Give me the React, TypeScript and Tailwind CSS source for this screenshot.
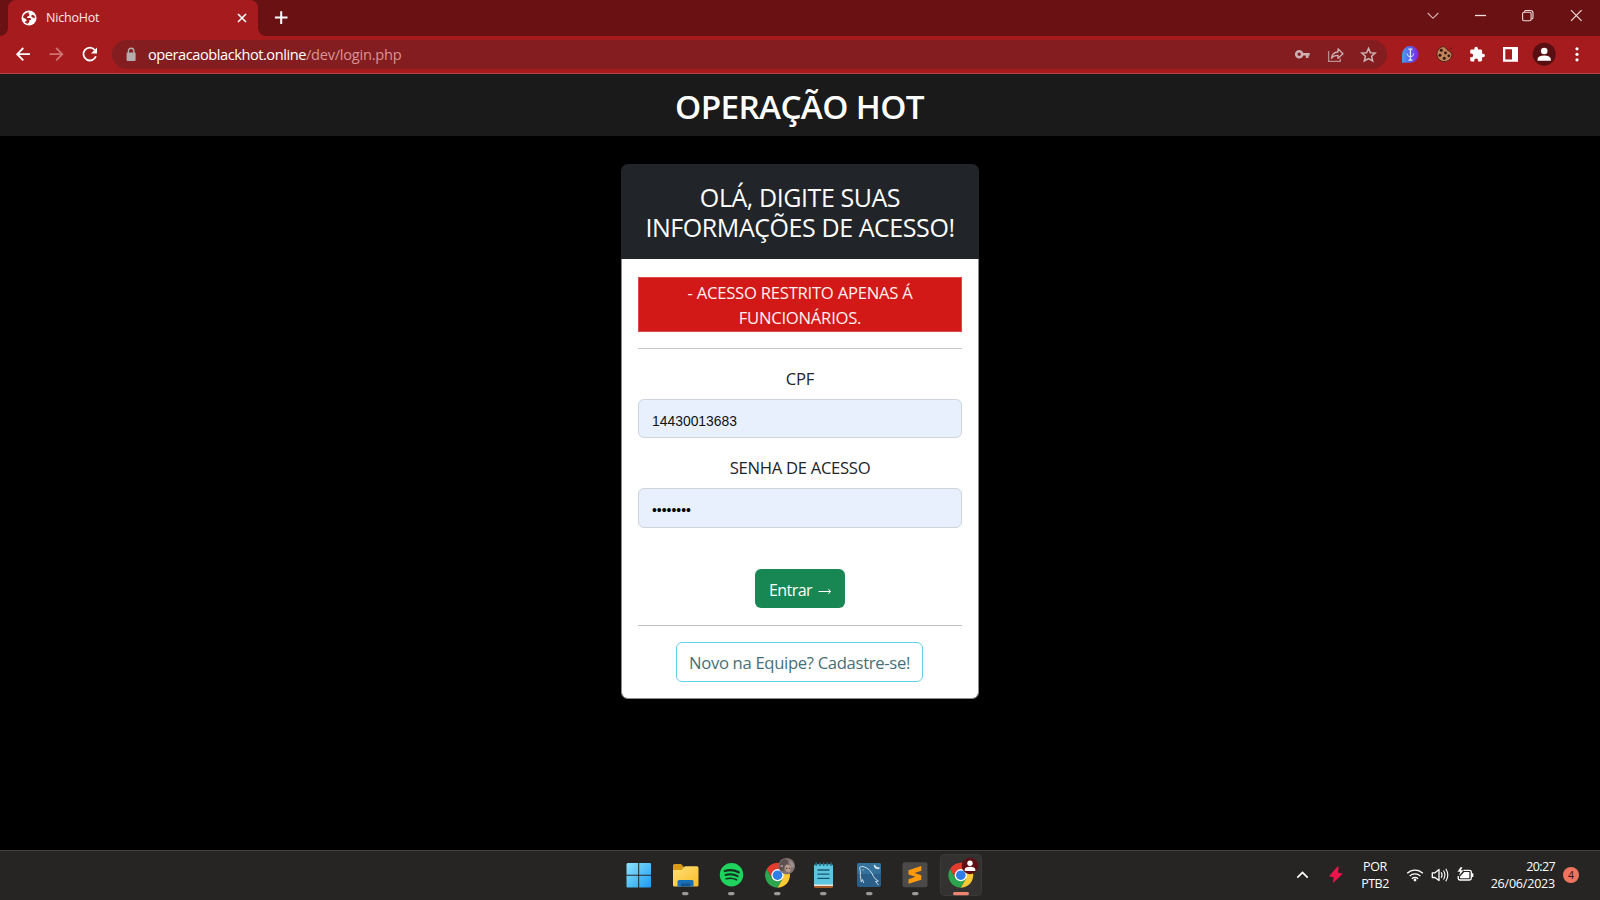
import type { ReactNode } from "react";

function ChromeLogo({ cx, cy }: { cx: number; cy: number }) {
  return (
    <g transform={`translate(${cx} ${cy})`}>
      <path d="M-10.8 -6.2A12.5 12.5 0 0 1 10.8 -6.2L0 -6.2L-5.4 3.1Z" fill="#e33b2e" />
      <path d="M-10.8 -6.25A12.5 12.5 0 0 0 0 12.5L5.4 3.1L-5.4 3.1Z" fill="#2da44e" />
      <path d="M10.8 -6.25A12.5 12.5 0 0 1 0 12.5L5.4 3.1L0 -6.2Z" fill="#fcc934" />
      <circle r="6.1" fill="#fff" />
      <circle r="4.8" fill="#2f7de9" />
    </g>
  );
}

function TaskIcon({ x, active, running = true, children }: { x: number; active?: boolean; running?: boolean; children: ReactNode }) {
  return (
    <svg viewBox={`${x - 23} 851 46 49`} className="h-[49px] w-[46px] shrink-0">
      {active && <rect x={x - 20.5} y="854.5" width="41" height="41" rx="4" fill="#333231" stroke="#3b3a39" strokeWidth="1" />}
      {children}
      {running &&
        (active ? (
          <rect x={x - 8} y="892" width="16" height="3.2" rx="1.6" fill="#ee8571" />
        ) : (
          <rect x={x - 3} y="892" width="6.5" height="3.2" rx="1.6" fill="#9b9a99" />
        ))}
    </svg>
  );
}

function TitleBar() {
  return (
    <div className="flex h-9 bg-[#6a1113]">
      <svg viewBox="0 0 8 36" className="h-9 w-2 shrink-0">
        <path d="M8 28V36H0A8 8 0 0 0 8 28Z" fill="#a61c1e" />
      </svg>
      <div className="flex h-9 w-[250px] items-center rounded-t-lg bg-[#a61c1e] pr-[11px] pl-[13px]">
        <svg viewBox="0 0 16 16" className="mb-px h-4 w-4">
          <circle cx="8" cy="8" r="7.5" fill="#fff" />
          <path d="M8.600 1.900Q7 2.500 7.600 3.800 9 4.200 8.300 5.600 7.600 6.600 6.200 6.700L6 8H9Q10.200 8.300 10.100 9.800L8.300 10.300 8.200 11.800 7 13.800Q5 13.500 3.500 12L5.600 11 5.300 9.300 2 7.600Q2.300 3 8.600 1.900Z" fill="#a61c1e" />
          <path d="M10.300 5.200Q12.500 4.300 13.600 6L14 8.300 12.300 7.700 10.600 7Z" fill="#a61c1e" />
        </svg>
        <span className="ml-[9px] grow text-[12.5px] leading-4 tracking-[-0.2px] text-[#fbe6e6]">NichoHot</span>
        <svg viewBox="0 0 10 10" className="mb-px h-[10px] w-[10px]">
          <path d="M1 1 9 9M9 1 1 9" stroke="#fff" strokeWidth="1.6" />
        </svg>
      </div>
      <svg viewBox="258 0 8 36" className="h-9 w-2 shrink-0">
        <path d="M258 28V36H266A8 8 0 0 1 258 28Z" fill="#a61c1e" />
      </svg>
      <svg viewBox="266 0 30 36" className="h-9 w-[30px]">
        <path d="M281.200 11.300V24M274.900 17.600H287.500" stroke="#fff" strokeWidth="2" />
      </svg>
      <svg viewBox="1410 0 190 36" className="ml-auto h-9 w-[190px]" fill="none" stroke="#f0dcdc" strokeWidth="1.1">
        <path d="M1427.700 13 1433 18.300 1438.300 13" stroke="#d9b4b4" />
        <path d="M1475 15.500H1486" strokeWidth="1.300" />
        <rect x="1522.600" y="12.200" width="8.500" height="8.500" rx="1.500" />
        <path d="M1524.500 12V11.500Q1525 10.500 1526 10.500H1530.500Q1533 10.500 1533 13V17.500Q1533 19 1531.500 19.300" />
        <path d="M1571 10.200 1581.600 20.800M1581.600 10.200 1571 20.800" strokeWidth="1.200" />
      </svg>
    </div>
  );
}

function ToolBar() {
  return (
    <div className="flex h-[38px] items-start border-b border-[#b5474b] bg-[#a61c1e]">
      <svg viewBox="0 36 112 37" className="h-[37px] w-[112px] shrink-0" fill="none" strokeWidth="1.800">
        <path d="M30 54.200H17.500M23.300 48 17.200 54.200 23.300 60.400" stroke="#fff" />
        <path d="M49.500 54.200H62M56.200 48 62.300 54.200 56.200 60.400" stroke="#cf7274" />
        <path d="M94.800 50A6.400 6.400 0 1 0 95.900 56.200" stroke="#fff" />
        <path d="M97 47.400V53.400H91Z" fill="#fff" />
      </svg>
      <div className="mt-1 flex h-[29px] w-[1275px] shrink-0 items-center rounded-full bg-[#841d1f] pl-[14px]">
        <svg viewBox="126 47 10 15" className="h-[15px] w-[10px]">
          <rect x="126.600" y="52.600" width="9" height="8.400" rx="1" fill="#b5acae" />
          <path d="M128.400 53V51A2.700 2.700 0 0 1 133.800 51V53" fill="none" stroke="#b5acae" strokeWidth="1.400" />
        </svg>
        <span className="mb-[2px] ml-[12px] text-[14.600px] leading-5 tracking-[-0.450px] text-white">operacaoblackhot.online</span>
        <span className="mb-[2px] text-[14.600px] leading-5 tracking-[-0.240px] text-[#dc9293]">/dev/login.php</span>
        <svg viewBox="1290 40 97 29" className="ml-auto h-[29px] w-[97px]" fill="none" stroke="#ccb0b2" strokeWidth="1.300">
          <circle cx="1299.200" cy="54.200" r="3" strokeWidth="2.600" />
          <path d="M1302.500 54.200H1309.700M1307.200 54V58" strokeWidth="2.600" />
          <path d="M1328.600 51V61.400H1340.300V58.500" stroke="#b98d8f" />
          <path d="M1331.500 58.300Q1332 52.300 1338 52V48.800L1343 53.700 1338 58.300V55.300Q1333.500 55.200 1331.500 58.300Z" strokeLinejoin="round" />
          <path d="M1368.500 48.300 1370.400 52.700 1375.200 53.100 1371.600 56.300 1372.700 61 1368.500 58.500 1364.300 61 1365.400 56.300 1361.800 53.100 1366.600 52.700Z" strokeWidth="1.500" />
        </svg>
      </div>
      <svg viewBox="1387 36 213 37" className="h-[37px] w-[213px] shrink-0">
        <defs>
          <linearGradient id="mic" x1="0" x2="1" y1="0" y2="0">
            <stop offset="0" stopColor="#3fa0e8" />
            <stop offset="0.550" stopColor="#5b5cf0" />
            <stop offset="1" stopColor="#8a1ee0" />
          </linearGradient>
        </defs>
        <path d="M1410.300 46A8.300 8.300 0 0 1 1410.300 62.700H1402V54.300A8.300 8.300 0 0 1 1410.300 46Z" fill="url(#mic)" />
        <path d="M1410.400 49V60M1408.400 49.200H1412.400M1408.400 60.200H1412.400" stroke="#e5e8ff" strokeWidth="1.300" />
        <path d="M1407 53.500Q1407.300 56.800 1410.400 56.800T1413.800 53.500" fill="none" stroke="#d5dcff" strokeWidth="1" />
        <path d="M1444.500 46.500A7.600 7.600 0 1 0 1451.800 52.500Q1449.800 52.800 1449.300 50.800 1447 51 1446.900 48.700 1445 48.500 1444.500 46.500Z" fill="#c08458" stroke="#4f1f14" strokeWidth="1" />
        <g fill="#331510">
          <circle cx="1441.300" cy="50.300" r="1.500" />
          <circle cx="1445.500" cy="53" r="1.400" />
          <circle cx="1440" cy="55.300" r="1.500" />
          <circle cx="1448.800" cy="55.800" r="1.400" />
          <circle cx="1444.300" cy="58.300" r="1.500" />
          <circle cx="1451" cy="48.300" r="0.700" />
        </g>
        <path
          transform="translate(1468.800 46) scale(0.700)"
          d="M20.500 11H19V7c0-1.100-.9-2-2-2h-4V3.500a2.500 2.500 0 0 0-5 0V5H4c-1.100 0-1.990.9-1.990 2v3.800H3.500c1.490 0 2.700 1.210 2.700 2.700s-1.210 2.700-2.700 2.700H2V20c0 1.100.9 2 2 2h3.800v-1.500c0-1.490 1.210-2.700 2.700-2.700 1.490 0 2.700 1.210 2.700 2.700V22H17c1.100 0 2-.9 2-2v-4h1.500a2.500 2.500 0 0 0 0-5z"
          fill="#fff"
        />
        <path d="M1503 47H1518V61.800H1503ZM1505.300 49.300V59.500H1512V49.300Z" fillRule="evenodd" fill="#fff" />
        <circle cx="1544.200" cy="54.200" r="11.500" fill="#590f11" />
        <circle cx="1544.200" cy="51" r="3.300" fill="#fff" />
        <path d="M1537.600 60.800V59Q1538 55.800 1544.200 55.600 1550.400 55.800 1550.800 59V60.800Z" fill="#fff" />
        <g fill="#fff">
          <circle cx="1577" cy="48.800" r="1.600" />
          <circle cx="1577" cy="54.300" r="1.600" />
          <circle cx="1577" cy="59.800" r="1.600" />
        </g>
      </svg>
    </div>
  );
}

function LoginCard() {
  return (
    <div className="mx-auto flex h-[535px] w-[358px] flex-col text-[16.670px] leading-[25px] text-[#212529]">
      <h4 className="h-[95px] shrink-0 rounded-t-[7px] bg-[#212529] px-4 pt-[18px] text-center text-[25px] leading-[30px] tracking-[-0.430px] text-white">
        OLÁ, DIGITE SUAS INFORMAÇÕES DE ACESSO!
      </h4>
      <div className="flex grow flex-col items-center rounded-b-[7px] border border-t-0 border-[#8a8c8e] bg-white px-4 pt-[18px]">
        <div className="h-[55px] w-full border border-[#dc4a4a] bg-[#d31818] pt-[2px] text-center tracking-[-0.260px] text-[#fff0f0]">
          - ACESSO RESTRITO APENAS Á<br />
          FUNCIONÁRIOS.
        </div>
        <hr className="mt-4 w-full border-[#c8c9ca]" />
        <label className="mt-[17px] tracking-[-0.280px]">CPF</label>
        <div className="mt-2 flex h-[39px] w-full items-center rounded-[6px] border border-[#ced4da] bg-[#e8f0fe] pt-[4px] pl-[13px] font-['Liberation_Sans',sans-serif] text-[13.900px] leading-4 text-[#111]">
          14430013683
        </div>
        <label className="mt-[17px] tracking-[-0.300px]">SENHA DE ACESSO</label>
        <div className="mt-2 flex h-10 w-full items-center rounded-[6px] border border-[#ced4da] bg-[#e8f0fe] pt-[3px] pl-[13px] font-['Liberation_Sans',sans-serif] text-[13.900px] leading-4 text-black">
          ••••••••
        </div>
        <button className="mt-[41px] flex h-[39px] w-[90px] shrink-0 items-center rounded-[6px] bg-[#198754] pt-[3px] pl-[14px] text-white">
          <span className="text-[16px] tracking-[-0.560px]">Entrar</span>
          <svg viewBox="0 0 14 10" className="mt-px ml-[6px] h-[10px] w-[14px]" fill="none" stroke="#fff" strokeWidth="1">
            <path d="M0.500 5.500H12.500M10.300 3.200 12.700 5.500 10.300 7.800" />
          </svg>
        </button>
        <hr className="mt-[17px] w-full border-[#c0c1c2]" />
        <button className="mt-4 mr-px flex h-10 w-[247px] shrink-0 items-center justify-center rounded-[6px] border border-[#62d3e6] pt-px tracking-[-0.330px] whitespace-nowrap text-[#466f78]">
          Novo na Equipe? Cadastre-se!
        </button>
      </div>
    </div>
  );
}

function TaskBar() {
  return (
    <div className="flex h-[50px] border-t border-[#41403f] bg-[#262524]">
      <div className="ml-[616px] flex w-[368px] shrink-0">
        <TaskIcon x={639} running={false}>
          <defs>
            <linearGradient id="win" x1="0" x2="1" y1="0" y2="1">
              <stop offset="0" stopColor="#8fe3fd" />
              <stop offset="1" stopColor="#1a9cf0" />
            </linearGradient>
          </defs>
          <path d="M627.500 863H638.200V874.700H626.500V864ZM639.200 863H650Q651 863 651 864V874.700H639.200ZM626.500 875.700H638.200V887.500H627.500Q626.500 887.500 626.500 886.500ZM639.200 875.700H651V886.500Q651 887.500 650 887.500H639.200Z" fill="url(#win)" />
        </TaskIcon>
        <TaskIcon x={685}>
          <defs>
            <linearGradient id="fold" x1="0" x2="1" y1="0" y2="1">
              <stop offset="0" stopColor="#ffdf79" />
              <stop offset="1" stopColor="#f8bd27" />
            </linearGradient>
          </defs>
          <path d="M673 865.500Q673 864 674.500 864H681L684.500 867.500H690V872H673Z" fill="#d99a1c" />
          <path d="M673 870H681.500L685 866.300H697Q698.500 866.300 698.500 867.800V885.300Q698.500 886.500 697 886.500H674.500Q673 886.500 673 885.300Z" fill="url(#fold)" />
          <path d="M677.500 886.500V881.500Q677.500 880 679 880H692Q693.500 880 693.500 881.500V886.500Z" fill="#1670b8" />
          <rect x="681" y="883.500" width="9" height="3" fill="#12558f" />
        </TaskIcon>
        <TaskIcon x={731}>
          <circle cx="731.500" cy="874.800" r="11.700" fill="#1ed45f" />
          <g fill="none" stroke="#12311c" strokeLinecap="round">
            <path d="M724.800 871Q732 868.800 738.700 872.300" strokeWidth="2.300" />
            <path d="M725.500 875Q732 873.200 737.600 876.200" strokeWidth="1.900" />
            <path d="M726.200 878.800Q731.800 877.300 736.500 879.800" strokeWidth="1.600" />
          </g>
        </TaskIcon>
        <TaskIcon x={777}>
          <ChromeLogo cx={777.5} cy={875.2} />
          <circle cx="786.700" cy="866.200" r="8.300" fill="#82716c" />
          <path d="M779 868Q779 861 785 859 789 860 788 864 784 864 783.500 871 780 871 779 868Z" fill="#5c5150" />
          <path d="M785 866Q788 863.500 791 866.500L790.500 871Q787.500 874 785.500 870Z" fill="#b99c90" />
          <path d="M789 860Q794 862 794.200 867L791.500 868 790 864Z" fill="#99918f" />
          <path d="M786 868.300H787.500M789 868.300H790.300" stroke="#42332f" strokeWidth="1" />
          <path d="M780.500 866H783" stroke="#b1a09a" strokeWidth="1.500" />
        </TaskIcon>
        <TaskIcon x={823}>
          <path d="M814 884H833V886.500Q833 888 831.500 888H815.500Q814 888 814 886.500Z" fill="#a85c25" />
          <path d="M814 883.500H833V886H814Z" fill="#eee7dc" />
          <path d="M814 866Q814 864.300 815.500 864.300H831.500Q833 864.300 833 866V884.500H814Z" fill="#5cc6e0" />
          <path d="M817.500 870H829.500M817.500 874.200H829.500M817.500 878.400H829.500" stroke="#17566c" strokeWidth="1.300" />
          <path d="M816.200 862.500V866M819.900 862.500V866M823.600 862.500V866M827.300 862.500V866M831 862.500V866" stroke="#286e86" strokeWidth="1.500" />
        </TaskIcon>
        <TaskIcon x={869}>
          <rect x="857" y="863" width="24" height="24" rx="2" fill="#2a5f8a" />
          <rect x="857" y="863" width="24" height="11" rx="2" fill="#34729b" />
          <g fill="none" stroke="#c9dbe6" strokeWidth="1" strokeLinejoin="round">
            <path d="M863.800 883 862.500 879.500 861.300 882 860.300 875.500Q861 871 859.500 867.500 861 865.800 864 866.800 870.500 869 873.500 876.500 874.500 879 878.300 881L875.500 881.500 878.500 885" />
            <path d="M863 869.500V870.500" />
          </g>
          <path d="M874.200 864.500 876.700 867 880 867.800 878.800 869.300 875.300 868.500 873.700 866Z" fill="#e2edf3" />
        </TaskIcon>
        <TaskIcon x={915}>
          <rect x="902.500" y="862.300" width="25" height="25" rx="2" fill="#4b4a49" />
          <path d="M908.500 870.300 921.300 866V870.700L914.500 873 921.300 875.200V879.700L908.500 883.800V879.200L915.500 876.800 908.500 874.600Z" fill="#ff9a0d" />
        </TaskIcon>
        <TaskIcon x={961} active>
          <ChromeLogo cx={960.8} cy={875.2} />
          <circle cx="970" cy="866" r="8.300" fill="#5e0f14" />
          <circle cx="970" cy="863.300" r="2.700" fill="#fff" />
          <path d="M964.700 871V869.500Q965 866.800 970 866.700 975 866.800 975.300 869.500V871Z" fill="#fff" />
        </TaskIcon>
      </div>
      <div className="ml-auto flex text-[12.500px] leading-[17px] text-white">
        <svg viewBox="1290 851 66 49" className="h-[49px] w-[66px]">
          <path d="M1297.300 877.700 1302.500 872.500 1307.700 877.700" fill="none" stroke="#fff" strokeWidth="1.700" />
          <path d="M1337.500 866.600 1329 876.300 1333.800 877.500 1332.800 883.300 1342.800 873.800 1337.800 872.500 1338.700 867Z" fill="#f0124a" />
        </svg>
        <div className="flex w-[38px] flex-col items-center pt-[7px]">
          <span className="tracking-[-0.370px]">POR</span>
          <span className="tracking-[-0.490px]">PTB2</span>
        </div>
        <svg viewBox="1394 851 91 49" className="h-[49px] w-[91px]" fill="none" stroke="#fff" strokeWidth="1.300">
          <path d="M1407.200 873.300A11 11 0 0 1 1422.800 873.300M1409.600 876.100A7.500 7.500 0 0 1 1420.400 876.100M1411.900 878.700A4.500 4.500 0 0 1 1418.100 878.700" />
          <circle cx="1415" cy="880" r="1.400" fill="#fff" stroke="none" />
          <path d="M1432.300 872.800H1435L1439 869.500V880.500L1435 877.500H1432.300Z" strokeLinejoin="round" />
          <path d="M1441.200 872.200Q1443 875 1441.200 877.800M1443.500 870.500Q1446.300 875 1443.500 879.500M1445.800 868.800Q1449.800 875 1445.800 881.200" strokeWidth="1.100" />
          <path d="M1463.500 870.300H1469.500Q1471.300 870.300 1471.300 872V878.300Q1471.300 880 1469.500 880H1459.800Q1458.200 880 1458.200 878.300V876" />
          <path d="M1472.500 873.300V877" strokeWidth="1.700" />
          <path d="M1464.200 872H1469.300V878.300H1460V876.500Z" fill="#fff" stroke="none" />
          <path d="M1460.500 867.300 1457.500 871.800H1460.300L1459 875.800 1463.500 870.300H1460.800L1462.500 867.300Z" fill="#fff" stroke="none" />
        </svg>
        <div className="flex w-[70px] flex-col items-end pt-[7px]">
          <span className="tracking-[-0.600px]">20:27</span>
          <span className="tracking-[-0.200px]">26/06/2023</span>
        </div>
        <div className="mt-4 mr-[21px] ml-[8px] flex h-4 w-4 items-center justify-center rounded-full bg-[#f0745f] text-[10.500px] leading-4 text-[#3c1510]">4</div>
      </div>
    </div>
  );
}

export default function App() {
  return (
    <div className="flex h-[900px] w-[1600px] flex-col overflow-hidden bg-black font-['Open_Sans','Noto_Sans',sans-serif]">
      <TitleBar />
      <ToolBar />
      <header className="flex h-[62px] items-center justify-center bg-[#1a1a1a] pt-[2px] pr-px">
        <h1 className="text-[33.300px] leading-10 font-semibold tracking-[-0.650px] text-white">OPERAÇÃO HOT</h1>
      </header>
      <main className="grow pt-7">
        <LoginCard />
      </main>
      <TaskBar />
    </div>
  );
}
